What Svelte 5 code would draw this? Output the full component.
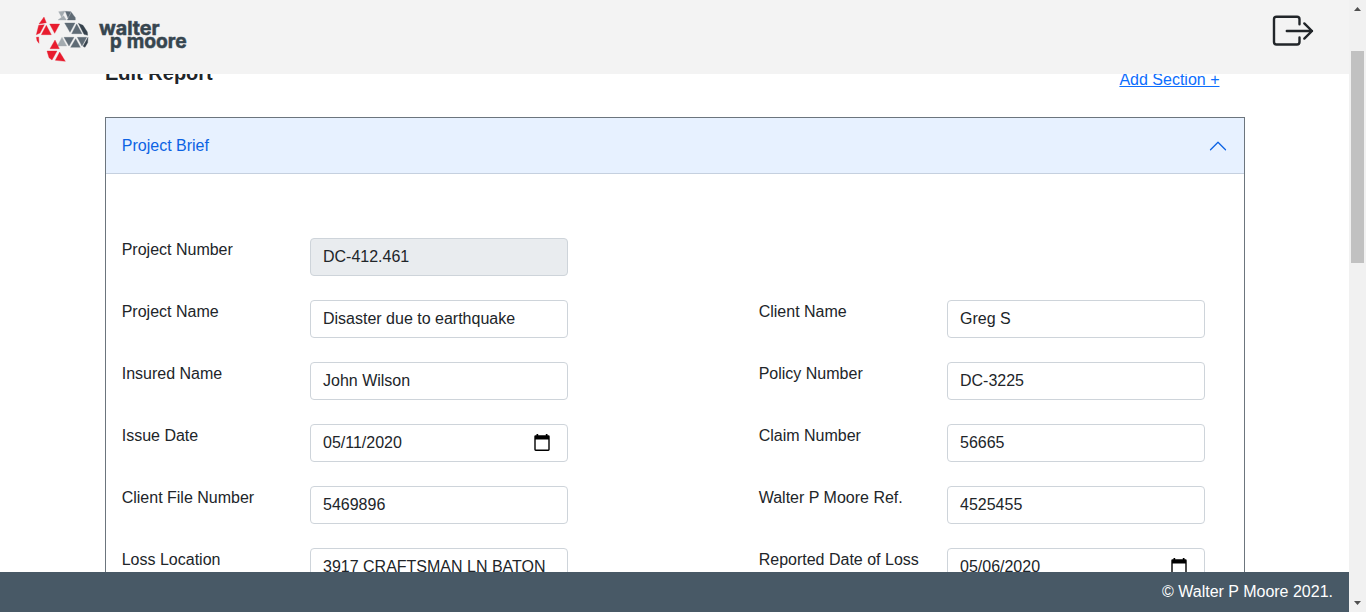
<script>
  const rows = [
    [{ label: 'Project Number', value: 'DC-412.461', disabled: true }, null],
    [{ label: 'Project Name', value: 'Disaster due to earthquake' }, { label: 'Client Name', value: 'Greg S' }],
    [{ label: 'Insured Name', value: 'John Wilson' }, { label: 'Policy Number', value: 'DC-3225' }],
    [{ label: 'Issue Date', value: '05/11/2020', date: true }, { label: 'Claim Number', value: '56665' }],
    [{ label: 'Client File Number', value: '5469896' }, { label: 'Walter P Moore Ref.', value: '4525455' }],
    [{ label: 'Loss Location', value: '3917 CRAFTSMAN LN BATON' }, { label: 'Reported Date of Loss', value: '05/06/2020', date: true }]
  ];
  const shards = [
    ['#a3abb0', '86,20 105,18 95,37'],
    ['#a3abb0', '101,32 109,45 84,45'],
    ['#5f6b75', '106,19 123,20 114,39'],
    ['#5f6b75', '124,22 136,38 136,45 112,45'],
    ['#5f6b75', '104,54 135,54 120,82'],
    ['#5f6b75', '140,57 156,86 125,86'],
    ['#36424d', '145,55 159,61 172,81 173,91 162,88'],
    ['#a3abb0', '96,97 110,123 82,123'],
    ['#5f6b75', '102,97 132,97 117,123'],
    ['#5f6b75', '137,101 151,127 122,127'],
    ['#5f6b75', '142,97 170,97 156,123'],
    ['#36424d', '174,97 173,113 165,127 159,124'],
    ['#e81c2e', '42,36 49,53 27,57'],
    ['#e81c2e', '26,61 43,59 30,84 19,89'],
    ['#e81c2e', '49,61 64,89 34,89'],
    ['#e81c2e', '59,57 89,57 74,85'],
    ['#e81c2e', '19,97 26,96 27,115 21,107'],
    ['#e81c2e', '75,105 88,131 60,131'],
    ['#e81c2e', '51,138 81,138 66,165 57,158'],
    ['#e81c2e', '89,141 106,169 76,166']
  ];
</script>

<div class="window">
  <div class="page">
    <header>
      <svg class="logo" width="160" height="62" viewBox="0 0 480 186" role="img" aria-label="Walter P Moore">
        {#each shards as [fill, points]}
          <polygon {points} {fill} stroke={fill} />
        {/each}
        <text x="207" y="90" textLength="182" lengthAdjust="spacingAndGlyphs">walter</text>
        <text x="240" y="128" textLength="35" lengthAdjust="spacingAndGlyphs">p</text>
        <text x="290" y="128" textLength="180" lengthAdjust="spacingAndGlyphs">moore</text>
      </svg>
      <svg class="exit" width="42" height="32" viewBox="0 0 42 32" fill="none" stroke="#212529" stroke-width="2.4" stroke-linecap="round" stroke-linejoin="round">
        <path d="M27.5 9.2V4.3Q27.5 1.8 25 1.8H4.5Q2 1.8 2 4.3V27Q2 29.5 4.5 29.5H25Q27.5 29.5 27.5 27V22.5M14.8 16H40M32.3 8.4L40 16L32.3 23.6" />
      </svg>
    </header>

    <main>
      <div class="title">
        <h1>Edit Report</h1>
        <a href="#add">Add Section +</a>
      </div>
      <section>
        <button class="toggle" type="button">
          <span>Project Brief</span>
          <svg width="20" height="20" viewBox="0 0 16 16" fill="none" stroke="#0c63e4" stroke-linecap="round" stroke-linejoin="round"><path d="M2 11L8 5L14 11" /></svg>
        </button>
        <div class="fields">
          {#each rows as row}
            <div class="row">
              {#each row as field}
                <div class="cell">
                  {#if field}
                    <span class="label">{field.label}</span>
                    <div class="control" class:disabled={field.disabled}>
                      <span>{field.value}</span>
                      {#if field.date}
                        <svg width="16" height="18" viewBox="0 0 16 18"><path fill="#000" fill-rule="evenodd" d="M2.5 0H4.2V1.3H11.8V0H13.5V1.3H14.5Q15.7 1.3 15.7 2.5V15.5Q15.7 16.9 14.3 16.9H1.7Q.3 16.9 .3 15.5V2.5Q.3 1.3 1.5 1.3H2.5ZM1.7 5.5V15.5H14.3V5.5Z" /></svg>
                      {/if}
                    </div>
                  {/if}
                </div>
              {/each}
            </div>
          {/each}
        </div>
      </section>
    </main>

    <footer>© Walter P Moore 2021.</footer>
  </div>
  <div class="scrollbar">
    <svg width="7" height="4" viewBox="0 0 7 4"><path d="M0 4L3.5 0L7 4Z" fill="#505050" /></svg>
    <div class="track"><div class="thumb"></div></div>
    <svg width="7" height="4" viewBox="0 0 7 4"><path d="M0 0L3.5 4L7 0Z" fill="#505050" /></svg>
  </div>
</div>

<style>
  .window {
    display: flex;
    height: 612px;
    overflow: hidden;
    background: #fff;
    color: #212529;
    font: 16px/24px "Liberation Sans", Arial, sans-serif;
  }
  .page { flex: 1; min-width: 0; display: flex; flex-direction: column; }
  header {
    box-sizing: border-box;
    flex: none;
    height: 74px;
    padding: 5px 35px 0 30px;
    display: flex;
    justify-content: space-between;
    align-items: flex-start;
    background: #f3f3f3;
  }
  .logo text { font: 700 57px Inter, sans-serif; fill: #36454f; stroke: #36454f; stroke-width: 1.5; }
  .exit { margin-top: 10px; }
  main { flex: 1; min-height: 0; overflow: hidden; padding: 0 104px 0 105px; }
  .title { display: flex; justify-content: space-between; margin-top: -13px; height: 56px; padding-right: 25.5px; }
  h1 { margin: 0; font-size: 20px; line-height: 24px; font-weight: 700; }
  .title a { margin-top: 7px; height: 24px; color: #0d6efd; }
  section { box-sizing: border-box; height: 600px; border: 1px solid #6c757d; }
  .toggle {
    box-sizing: border-box;
    width: 100%;
    height: 56px;
    padding: 0 16px 0 15.8px;
    display: flex;
    align-items: center;
    justify-content: space-between;
    border: 0;
    border-bottom: 1px solid #c5d0df;
    background: #e7f1ff;
    color: #0c63e4;
    font: inherit;
  }
  .fields { padding: 64px 0 0 15.7px; }
  .row { display: flex; margin-bottom: 24px; }
  .cell { display: flex; width: 637px; height: 38px; flex: none; }
  .row .cell:last-child { width: 447px; }
  .label { width: 188.3px; flex: none; white-space: nowrap; }
  .control {
    box-sizing: border-box;
    width: 258px;
    height: 38px;
    padding: 6px 16.5px 6px 12px;
    display: flex;
    justify-content: space-between;
    border: 1px solid #ced4da;
    border-radius: 4px;
    white-space: nowrap;
  }
  .control svg { margin-top: 2.5px; }
  .disabled { background: #e9ecef; }
  footer {
    box-sizing: border-box;
    flex: none;
    height: 40px;
    padding: 8px 16px 0;
    background: #485966;
    color: #fff;
    text-align: right;
  }
  .scrollbar {
    box-sizing: border-box;
    width: 17px;
    flex: none;
    padding: 7px 0;
    display: flex;
    flex-direction: column;
    align-items: center;
    background: #f1f1f1;
  }
  .scrollbar svg { flex: none; }
  .track { flex: 1; padding-top: 40px; }
  .thumb { width: 13px; height: 212px; background: #c1c1c1; }
</style>
